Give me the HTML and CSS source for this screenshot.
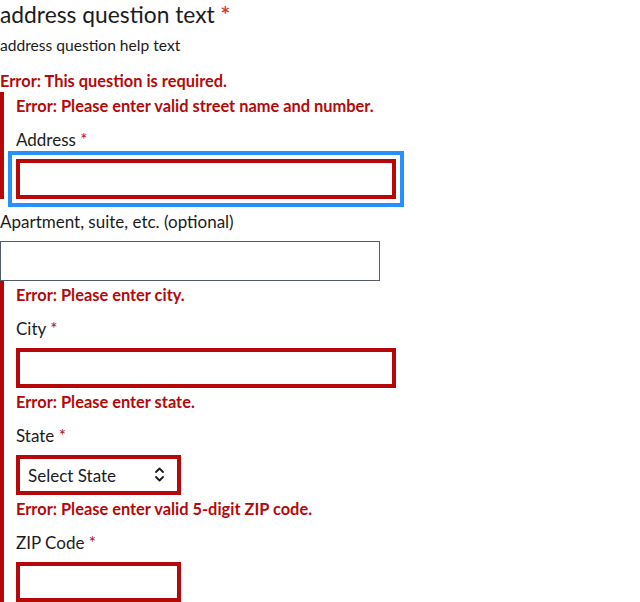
FILE: index.html
```html
<!DOCTYPE html>
<html lang="en">
<head>
<meta charset="utf-8">
<title>Address question</title>
<link rel="stylesheet" href="styles.css">
</head>
<body>
<div class="question">
  <div class="q-title">address question text <span class="req-title">*</span></div>
  <div class="q-help">address question help text</div>
  <div class="q-error">Error: This question is required.</div>

  <div class="err-group first">
    <div class="field">
      <div class="err-msg">Error: Please enter valid street name and number.</div>
      <label class="label" for="street">Address <span class="req">*</span></label>
      <input class="input input-error focused" id="street" type="text">
    </div>
  </div>

  <label class="label plain" for="apt">Apartment, suite, etc. (optional)</label>
  <input class="input input-plain" id="apt" type="text">

  <div class="err-group">
    <div class="field">
      <div class="err-msg">Error: Please enter city.</div>
      <label class="label" for="city">City <span class="req">*</span></label>
      <input class="input input-error" id="city" type="text">
    </div>
    <div class="field next">
      <div class="err-msg">Error: Please enter state.</div>
      <label class="label" for="state">State <span class="req">*</span></label>
      <div class="select-wrap">
        <select class="select" id="state"><option>Select State</option></select>
        <svg class="select-icon" width="9" height="16" viewBox="0 0 9 16" aria-hidden="true">
          <polyline points="1,5 4.5,1.5 8,5" fill="none" stroke="#1b1b1b" stroke-width="1.8" stroke-linecap="round" stroke-linejoin="round"/>
          <polyline points="1,10 4.5,13.5 8,10" fill="none" stroke="#1b1b1b" stroke-width="1.8" stroke-linecap="round" stroke-linejoin="round"/>
        </svg>
      </div>
    </div>
    <div class="field next">
      <div class="err-msg">Error: Please enter valid 5-digit ZIP code.</div>
      <label class="label" for="zip">ZIP Code <span class="req">*</span></label>
      <input class="input input-error input-short" id="zip" type="text">
    </div>
  </div>
</div>
</body>
</html>
```
FILE: styles.css
```css
html, body {
  margin: 0;
  padding: 0;
  background: #ffffff;
}
body {
  font-family: Lato, "Liberation Sans", sans-serif;
  color: #1b1b1b;
  overflow: hidden;
}
.question {
  display: flex;
  flex-direction: column;
  align-items: flex-start;
}
.q-title {
  font-size: 22.8px;
  line-height: 25px;
  padding-top: 2px;
}
.req-title {
  color: #d83933;
  font-weight: 700;
}
.q-help {
  font-size: 15.6px;
  line-height: 18px;
  padding-top: 2px;
  margin-top: 7px;
}
.q-error,
.err-msg {
  font-size: 16.4px;
  font-weight: 700;
  line-height: 18px;
  padding-top: 2px;
  color: #b50909;
}
.q-error {
  margin-top: 16px;
}
.err-group {
  align-self: stretch;
  border-left: 4px solid #b50909;
  padding: 3px 0 0 12px;
}
.err-group.first {
  margin-top: 2px;
}
.field {
  display: flex;
  flex-direction: column;
  align-items: flex-start;
}
.field.next {
  margin-top: 3px;
}
.label {
  display: block;
  font-size: 17px;
  line-height: 18px;
  padding-top: 2px;
  margin-top: 14px;
}
.label.plain {
  margin-top: 12px;
}
.req {
  color: #b50909;
}
.input {
  display: block;
  box-sizing: border-box;
  width: 380px;
  height: 40px;
  margin: 10px 0 0 0;
  padding: 8px;
  background: #ffffff;
  font-family: inherit;
  font-size: 17px;
  border-radius: 0;
}
.input-error {
  border: 4px solid #b50909;
}
.input-plain {
  border: 1px solid #565c65;
}
.input-short {
  width: 165px;
}
.focused {
  outline: 4px solid #2491ff;
  outline-offset: 4px;
}
.select-wrap {
  position: relative;
  margin-top: 10px;
  width: 165px;
  height: 40px;
}
.select {
  display: block;
  box-sizing: border-box;
  width: 165px;
  height: 40px;
  margin: 0;
  padding: 0 0 0 8px;
  border: 4px solid #b50909;
  border-radius: 0;
  background: #ffffff;
  color: #1b1b1b;
  font-family: inherit;
  font-size: 17px;
  -webkit-appearance: none;
  appearance: none;
}
.select-icon {
  position: absolute;
  right: 17px;
  top: 12px;
  pointer-events: none;
}
```
